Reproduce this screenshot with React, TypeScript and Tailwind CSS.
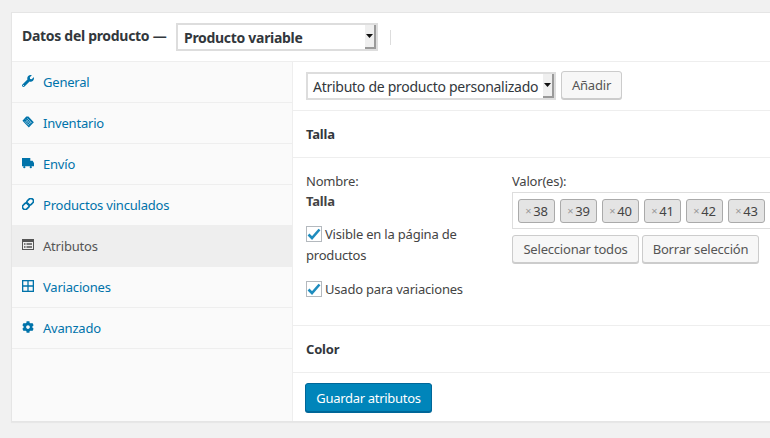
import React from 'react';
import { FaWrench, FaCog } from 'react-icons/fa';

const font = "font-['Noto_Sans','Open_Sans',sans-serif]";

function TagIcon() {
  return (
    <svg width="14" height="14" viewBox="0 0 14 14">
      <path d="M0.5 5.5 5 0.5h2.5l6 6.5v0.5L8 13.5z" fill="#0073aa" />
      <path d="M4.5 4 10 9.5M3 6l5 5M6 2.5l5.5 5.5M5.5 9 9 5.5M4 7.5 7.500 4M7 10.500 10.500 7" stroke="#9ccbe0" strokeWidth="0.8" />
    </svg>
  );
}

function TruckIcon() {
  return (
    <svg width="13" height="12" viewBox="0 0 13 12">
      <path d="M0 0.5h9v3h2.5L13 6v3.5H0z" fill="#0073aa" />
      <circle cx="2.5" cy="10.500" r="1.2" fill="#0073aa" />
      <circle cx="9.500" cy="10.500" r="1.2" fill="#0073aa" />
    </svg>
  );
}

function LinkIcon() {
  return (
    <svg width="12" height="12" viewBox="0 0 12 12" fill="none" stroke="#0073aa" strokeWidth="1.7">
      <rect x="5.6" y="0.2" width="5.2" height="7" rx="2.4" transform="rotate(45 8.2 3.7)" />
      <rect x="1.2" y="4.8" width="5.2" height="7" rx="2.4" transform="rotate(45 3.8 8.3)" />
    </svg>
  );
}

function ListIcon() {
  return (
    <svg width="12" height="11" viewBox="0 0 12 11">
      <rect width="12" height="11" fill="#555555" />
      <rect x="1" y="3" width="10" height="7" fill="#eeeeee" />
      <path d="M2 5h1.500M4.500 5H10M2 8h1.500M4.500 8H10" stroke="#555555" strokeWidth="1.4" />
    </svg>
  );
}

function GridIcon() {
  return (
    <svg width="12" height="12" viewBox="0 0 12 12" fill="none" stroke="#0073aa" strokeWidth="1.3">
      <rect x="0.65" y="0.65" width="10.7" height="10.7" />
      <path d="M6 0.5v11M0.5 6h11" />
    </svg>
  );
}

const tabs = [
  { label: 'General', icon: <FaWrench className="h-[12px] w-[12px]" /> },
  { label: 'Inventario', icon: <TagIcon /> },
  { label: 'Envío', icon: <TruckIcon /> },
  { label: 'Productos vinculados', icon: <LinkIcon /> },
  { label: 'Atributos', icon: <ListIcon />, active: true },
  { label: 'Variaciones', icon: <GridIcon /> },
  { label: 'Avanzado', icon: <FaCog className="h-[12px] w-[12px]" /> }
];

const sizes = ['38', '39', '40', '41', '42', '43'];

function SelectArrow() {
  return (
    <span className="flex h-full w-[11px] shrink-0 items-center justify-center border-r-2 border-b-2 border-[#9a9a9a] bg-[#efefef]">
      <svg width="7" height="4" viewBox="0 0 7 4"><path d="M0 0h7L3.5 4z" fill="#111" /></svg>
    </span>
  );
}

function Check() {
  return (
    <span className="flex h-[16px] w-[16px] shrink-0 items-center justify-center border border-[#b4b9be] bg-white">
      <svg width="14" height="12" viewBox="0 0 14 12"><path d="M1.5 6.5 5 10l7.5-8.5" fill="none" stroke="#1e8cbe" strokeWidth="2.6" /></svg>
    </span>
  );
}

function Btn({ children, className = '' }: { children: React.ReactNode; className?: string }) {
  return (
    <div className={`flex h-[28px] items-center justify-center rounded-[3px] border border-[#cccccc] bg-[#f7f7f7] pt-[2px] text-[13px] text-[#555555] shadow-[0_1px_0_#cccccc] ${className}`}>
      {children}
    </div>
  );
}

export default function App() {
  return (
    <div className={`h-[438px] w-[770px] overflow-hidden bg-[#f1f1f1] pt-[12px] pl-[11px] text-[13px] tracking-[-0.2px] text-[#444444] ${font}`}>
      <div className="w-[770px] border border-[#e5e5e5] bg-white shadow-[0_1px_1px_rgba(0,0,0,0.04)]">
        {/* Header */}
        <div className="flex h-[49px] items-center border-b border-[#eeeeee] pl-[10px]">
          <span className="w-[154px] pb-[4px] text-[14px] font-bold tracking-[-0.3px] text-[#32373c]">Datos del producto —</span>
          <div className="flex h-[28px] w-[202px] items-center border-2 border-[#dddddd] pl-[6px] text-[14px] font-bold tracking-[-0.3px] text-[#32373c]">
            <span className="flex-1">Producto variable</span>
            <SelectArrow />
          </div>
          <span className="ml-[12px] h-[15px] w-px bg-[#dddddd]" />
        </div>

        <div className="flex h-[359px]">
          {/* Sidebar */}
          <div className="w-[281px] shrink-0 border-r border-[#eeeeee] bg-[#fafafa]">
            {tabs.map((t) => (
              <div
                key={t.label}
                className={`flex h-[41px] items-center gap-[9px] border-b border-[#eeeeee] pl-[10px] ${t.active ? 'bg-[#eeeeee] text-[#555555]' : 'text-[#0073aa]'}`}>
                <span className="flex w-[12px] justify-center pb-[3px]">{t.icon}</span>
                <span className="pt-[2px]">{t.label}</span>
              </div>
            ))}
          </div>

          {/* Panel */}
          <div className="min-w-0 flex-1">
            <div className="flex h-[49px] items-center gap-[5px] border-b border-[#eeeeee] pl-[13px]">
              <div className="flex h-[28px] w-[250px] items-center border-2 border-[#dddddd] pl-[5px] text-[14px] tracking-[-0.27px] text-[#32373c]">
                <span className="flex-1 whitespace-nowrap">Atributo de producto personalizado</span>
                <SelectArrow />
              </div>
              <Btn className="mb-[2px] w-[61px]">Añadir</Btn>
            </div>

            <div className="flex h-[47px] items-center border-b border-[#eeeeee] pt-[2px] pl-[13px] font-bold text-[#32373c]">Talla</div>

            <div className="flex h-[168px] border-b border-[#eeeeee] pt-[13px] pl-[13px]">
              <div className="w-[206px] shrink-0">
                <div className="leading-[20px]">Nombre:</div>
                <div className="font-bold leading-[20px]">Talla</div>
                <div className="mt-[12px] leading-[21px]">
                  <div className="flex h-[21px] items-center gap-[3px]"><Check /><span className="pt-[2px]">Visible en la página de</span></div>
                  <div className="h-[21px] pt-px">productos</div>
                </div>
                <div className="mt-[13px] flex h-[21px] items-center gap-[3px] leading-[21px]"><Check /><span className="pt-[2px]">Usado para variaciones</span></div>
              </div>
              <div className="min-w-0 flex-1">
                <div className="leading-[20px]">Valor(es):</div>
                <div className="mt-px flex h-[37px] w-[280px] items-center gap-[5px] border border-[#dddddd] pl-[5px]">
                  {sizes.map((s) => (
                    <span key={s} className="flex h-[24px] w-[37px] items-center justify-center gap-[2px] rounded-[3px] border border-[#aaaaaa] bg-[#e4e4e4] pt-[2px] text-[13px]">
                      <span className="text-[11px] text-[#999999]">×</span>{s}
                    </span>
                  ))}
                </div>
                <div className="mt-[6px] flex gap-[3px]">
                  <Btn className="w-[127px]">Seleccionar todos</Btn>
                  <Btn className="w-[117px]">Borrar selección</Btn>
                </div>
              </div>
            </div>

            <div className="flex h-[47px] items-center border-b border-[#eeeeee] pt-[2px] pl-[13px] font-bold text-[#32373c]">Color</div>

            <div className="pt-[10px] pl-[12px]">
              <div className="flex h-[29px] w-[127px] items-center justify-center rounded-[3px] border border-[#006799] bg-[#0085ba] pt-[2px] text-[13px] tracking-[-0.3px] text-white shadow-[0_1px_0_#006799]">Guardar atributos</div>
            </div>
          </div>
        </div>
      </div>
    </div>
  );
}
